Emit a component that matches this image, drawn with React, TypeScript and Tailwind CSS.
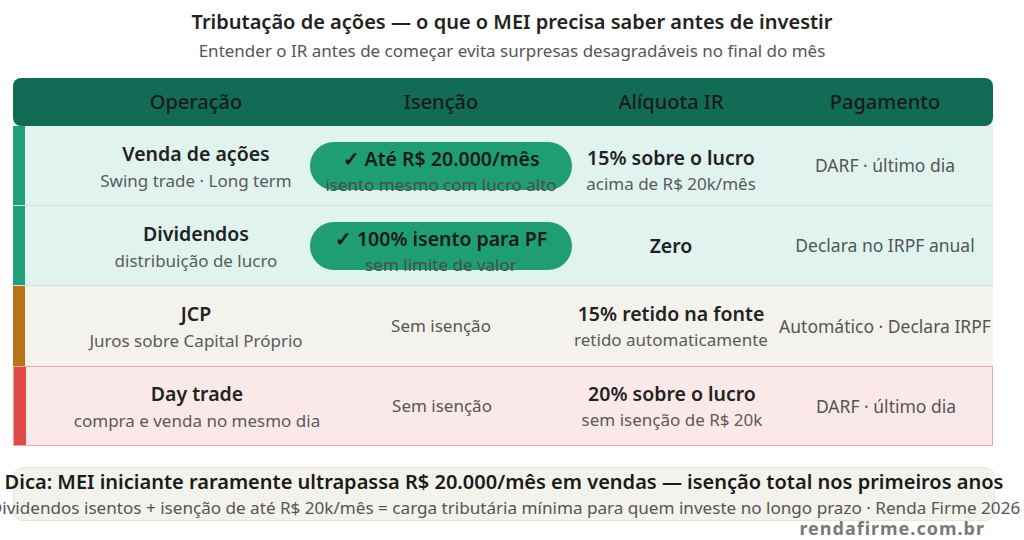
import React from 'react';

type Row = {
  bar: string;
  bg: string;
  border: string;
  op: string;
  opSub: string;
  pill?: { title: string; sub: string };
  exempt?: string;
  rate: string;
  rateSub?: string;
  pay: string;
};

const rows: Row[] = [
  {
    bar: 'bg-[#22a079]',
    bg: 'bg-[#e0f3ee]',
    border: 'border-b border-[#cfe2dc]',
    op: 'Venda de ações',
    opSub: 'Swing trade · Long term',
    pill: { title: '✓ Até R$ 20.000/mês', sub: 'isento mesmo com lucro alto' },
    rate: '15% sobre o lucro',
    rateSub: 'acima de R$ 20k/mês',
    pay: 'DARF · último dia',
  },
  {
    bar: 'bg-[#22a079]',
    bg: 'bg-[#e0f3ee]',
    border: 'border-b border-[#cfe2dc]',
    op: 'Dividendos',
    opSub: 'distribuição de lucro',
    pill: { title: '✓ 100% isento para PF', sub: 'sem limite de valor' },
    rate: 'Zero',
    pay: 'Declara no IRPF anual',
  },
  {
    bar: 'bg-[#b87316]',
    bg: 'bg-[#f3f2ec]',
    border: '',
    op: 'JCP',
    opSub: 'Juros sobre Capital Próprio',
    exempt: 'Sem isenção',
    rate: '15% retido na fonte',
    rateSub: 'retido automaticamente',
    pay: 'Automático · Declara IRPF',
  },
  {
    bar: 'bg-[#e24a4a]',
    bg: 'bg-[#fbe9e9]',
    border: 'border border-[#f3a4a4]',
    op: 'Day trade',
    opSub: 'compra e venda no mesmo dia',
    exempt: 'Sem isenção',
    rate: '20% sobre o lucro',
    rateSub: 'sem isenção de R$ 20k',
    pay: 'DARF · último dia',
  },
];

const cols = 'grid grid-cols-[342px_148px_312px_116px_1fr]';

const TableRow = ({ row }: { row: Row }) => (
  <div className={`flex h-[80px] ${row.bg} ${row.border}`}>
    <div className={`w-[12px] shrink-0 ${row.bar}`} />
    <div className={`${cols} flex-1`}>
      <div className="flex flex-col items-center justify-center pt-[2px]">
        <span className="whitespace-nowrap text-[19.5px] font-semibold leading-[28px] text-[#222]">{row.op}</span>
        <span className="whitespace-nowrap text-[17px] leading-[26px] text-[#5a5a5a]">{row.opSub}</span>
      </div>
      <div className="relative flex flex-col items-center justify-center pt-[10px]">
        {row.pill ? (
          <>
            <div className="absolute left-1/2 top-1/2 h-[48px] w-[262px] -translate-x-1/2 -translate-y-1/2 rounded-full bg-[#1f9e74]" />
            <span className="relative whitespace-nowrap text-[19.5px] font-semibold leading-[28px] text-[#1a1a1a]">{row.pill.title}</span>
            <span className="relative whitespace-nowrap text-[17px] leading-[24px] text-[#4c4c4c]">{row.pill.sub}</span>
          </>
        ) : (
          <span className="-mt-[10px] whitespace-nowrap text-[17px] text-[#555]">{row.exempt}</span>
        )}
      </div>
      <div className={`flex flex-col items-center justify-center ${row.pill && row.rateSub ? 'pt-[8px]' : 'pt-[0px]'}`}>
        <span className="whitespace-nowrap text-[19.5px] font-semibold leading-[28px] text-[#222]">{row.rate}</span>
        {row.rateSub && (
          <span className="whitespace-nowrap text-[17px] leading-[24px] text-[#5a5a5a]">{row.rateSub}</span>
        )}
      </div>
      <div className="flex items-center justify-center">
        <span className="whitespace-nowrap text-[17.5px] text-[#555]">{row.pay}</span>
      </div>
    </div>
  </div>
);

export default function App() {
  return (
    <div className="relative h-[540px] w-[1024px] overflow-hidden bg-white font-['Noto_Sans',sans-serif]">
      <div className="flex flex-col items-center pt-[8px]">
        <h1 className="text-[20px] font-semibold leading-[28px] text-[#222]">
          Tributação de ações — o que o MEI precisa saber antes de investir
        </h1>
        <p className="mt-[2px] text-[17px] leading-[26px] text-[#555]">
          Entender o IR antes de começar evita surpresas desagradáveis no final do mês
        </p>
      </div>

      <div className="ml-[13px] mt-[14px] w-[980px]">
        <div className={`${cols} h-[48px] rounded-[8px] bg-[#126b55] pl-[12px]`}>
          {['Operação', 'Isenção', 'Alíquota IR', 'Pagamento'].map((h) => (
            <div key={h} className="flex items-center justify-center whitespace-nowrap text-[20px] font-medium text-[#1a1a1a]">
              {h}
            </div>
          ))}
        </div>
        {rows.map((r) => (
          <TableRow key={r.op} row={r} />
        ))}
      </div>

      <div className="ml-[13px] mt-[21px] flex h-[54px] w-[982px] flex-col items-center justify-center rounded-[10px] border border-[#e6e5dc] bg-[#f3f2ec]">
        <span className="whitespace-nowrap text-[20px] font-semibold leading-[27px] text-[#1a1a1a]">
          Dica: MEI iniciante raramente ultrapassa R$ 20.000/mês em vendas — isenção total nos primeiros anos
        </span>
        <span className="translate-x-[1px] whitespace-nowrap text-[17.1px] leading-[25px] text-[#555]">
          Dividendos isentos + isenção de até R$ 20k/mês = carga tributária mínima para quem investe no longo prazo · Renda Firme 2026
        </span>
      </div>

      <div className="absolute bottom-[-2px] right-[39px] text-[18px] font-bold tracking-[1px] text-[#7a7a7a]">
        rendafirme.com.br
      </div>
    </div>
  );
}
